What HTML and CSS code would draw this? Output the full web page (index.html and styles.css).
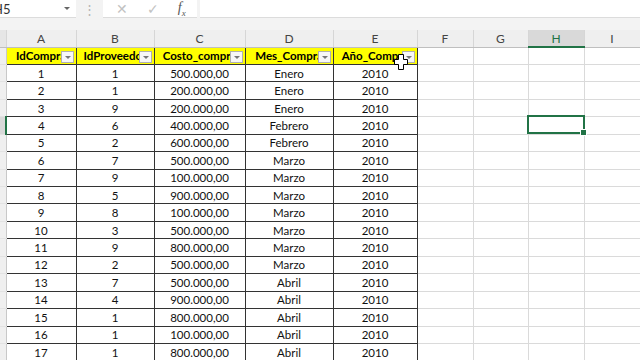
FILE: index.html
```html
<!DOCTYPE html>
<html lang="es">
<head>
  <meta charset="UTF-8" />
  <title>Compras - Excel</title>
  <link rel="stylesheet" href="styles.css">
</head>
<body>
  <div class="excel">
    <div class="formula-bar">
      <div class="name-box"><span class="cell-ref">H5</span><span class="caret"></span></div>
      <div class="grip">&#8942;</div>
      <div class="fx-buttons">
        <span class="btn-cancel">&#10005;</span>
        <span class="btn-enter">&#10003;</span>
        <span class="btn-fx"><i>f</i><sub>x</sub></span>
      </div>
      <div class="formula-input"></div>
    </div>

    <table class="sheet">
      <colgroup>
        <col class="c-row">
        <col class="c-a"><col class="c-b"><col class="c-c"><col class="c-d"><col class="c-e">
        <col class="c-f"><col class="c-g"><col class="c-h"><col class="c-i">
      </colgroup>
      <thead>
        <tr class="letters">
          <th class="corner"></th>
          <th>A</th><th>B</th><th>C</th><th>D</th><th>E</th>
          <th>F</th><th>G</th><th class="sel">H</th><th>I</th>
        </tr>
      </thead>
      <tbody>
        <tr class="titles">
          <th class="rownum"></th>
          <td class="t"><span>IdCompra</span><i class="filter"></i></td>
          <td class="t"><span>IdProveedor</span><i class="filter"></i></td>
          <td class="t"><span>Costo_compra</span><i class="filter"></i></td>
          <td class="t"><span>Mes_Compra</span><i class="filter"></i></td>
          <td class="t"><span>Año_Compra</span><i class="filter"></i></td>
          <td></td><td></td><td></td><td></td>
        </tr>
        <tr><th class="rownum"></th><td class="d">1</td><td class="d">1</td><td class="d">500.000,00</td><td class="d">Enero</td><td class="d">2010</td><td></td><td></td><td></td><td></td></tr>
        <tr><th class="rownum"></th><td class="d">2</td><td class="d">1</td><td class="d">200.000,00</td><td class="d">Enero</td><td class="d">2010</td><td></td><td></td><td></td><td></td></tr>
        <tr><th class="rownum"></th><td class="d">3</td><td class="d">9</td><td class="d">200.000,00</td><td class="d">Enero</td><td class="d">2010</td><td></td><td></td><td></td><td></td></tr>
        <tr><th class="rownum sel"></th><td class="d">4</td><td class="d">6</td><td class="d">400.000,00</td><td class="d">Febrero</td><td class="d">2010</td><td></td><td></td><td></td><td></td></tr>
        <tr><th class="rownum"></th><td class="d">5</td><td class="d">2</td><td class="d">600.000,00</td><td class="d">Febrero</td><td class="d">2010</td><td></td><td></td><td></td><td></td></tr>
        <tr><th class="rownum"></th><td class="d">6</td><td class="d">7</td><td class="d">500.000,00</td><td class="d">Marzo</td><td class="d">2010</td><td></td><td></td><td></td><td></td></tr>
        <tr><th class="rownum"></th><td class="d">7</td><td class="d">9</td><td class="d">100.000,00</td><td class="d">Marzo</td><td class="d">2010</td><td></td><td></td><td></td><td></td></tr>
        <tr><th class="rownum"></th><td class="d">8</td><td class="d">5</td><td class="d">900.000,00</td><td class="d">Marzo</td><td class="d">2010</td><td></td><td></td><td></td><td></td></tr>
        <tr><th class="rownum"></th><td class="d">9</td><td class="d">8</td><td class="d">100.000,00</td><td class="d">Marzo</td><td class="d">2010</td><td></td><td></td><td></td><td></td></tr>
        <tr><th class="rownum"></th><td class="d">10</td><td class="d">3</td><td class="d">500.000,00</td><td class="d">Marzo</td><td class="d">2010</td><td></td><td></td><td></td><td></td></tr>
        <tr><th class="rownum"></th><td class="d">11</td><td class="d">9</td><td class="d">800.000,00</td><td class="d">Marzo</td><td class="d">2010</td><td></td><td></td><td></td><td></td></tr>
        <tr><th class="rownum"></th><td class="d">12</td><td class="d">2</td><td class="d">500.000,00</td><td class="d">Marzo</td><td class="d">2010</td><td></td><td></td><td></td><td></td></tr>
        <tr><th class="rownum"></th><td class="d">13</td><td class="d">7</td><td class="d">500.000,00</td><td class="d">Abril</td><td class="d">2010</td><td></td><td></td><td></td><td></td></tr>
        <tr><th class="rownum"></th><td class="d">14</td><td class="d">4</td><td class="d">900.000,00</td><td class="d">Abril</td><td class="d">2010</td><td></td><td></td><td></td><td></td></tr>
        <tr><th class="rownum"></th><td class="d">15</td><td class="d">1</td><td class="d">800.000,00</td><td class="d">Abril</td><td class="d">2010</td><td></td><td></td><td></td><td></td></tr>
        <tr><th class="rownum"></th><td class="d">16</td><td class="d">1</td><td class="d">100.000,00</td><td class="d">Abril</td><td class="d">2010</td><td></td><td></td><td></td><td></td></tr>
        <tr><th class="rownum"></th><td class="d">17</td><td class="d">1</td><td class="d">800.000,00</td><td class="d">Abril</td><td class="d">2010</td><td></td><td></td><td></td><td></td></tr>
      </tbody>
    </table>

    <!-- active cell H5 -->
    <div class="selection"><i class="handle"></i></div>

    <!-- mouse pointer (excel fat cross) -->
    <svg class="pointer" width="14" height="16" viewBox="0 0 14 16">
      <path d="M4.5 0.5h5v5h4v5h-4v5h-5v-5h-4v-5h4z" fill="#fff" stroke="#000" stroke-width="1"/>
    </svg>
  </div>
</body>
</html>
```

FILE: styles.css
```css
body {
  margin: 0;
  background: #f3f3f3;
  font-family: Lato, "Open Sans", sans-serif;
  overflow: hidden;
}

.excel {
  position: relative;
  width: 640px;
  height: 360px;
  overflow: hidden;
}

/* formula bar */
.formula-bar {
  display: flex;
  height: 18px;
}

.name-box {
  width: 76px;
  background: #fff;
  border-bottom: 1px solid #dcdcdc;
  box-sizing: border-box;
  display: flex;
  align-items: center;
  justify-content: space-between;
  overflow: hidden;
}

.cell-ref {
  margin-left: -7px;
  font-size: 13px;
  color: #333;
}

.caret {
  width: 0;
  height: 0;
  margin-right: 6px;
  border-left: 3px solid transparent;
  border-right: 3px solid transparent;
  border-top: 3px solid #666;
}

.grip {
  width: 27px;
  text-align: center;
  color: #b5b5b5;
  font-size: 13px;
  line-height: 18px;
}

.fx-buttons {
  width: 94px;
  background: #fff;
  border-bottom: 1px solid #dcdcdc;
  box-sizing: border-box;
  display: flex;
  align-items: center;
  justify-content: space-around;
  padding: 0 2px 0 4px;
  font-size: 14px;
}

.btn-cancel, .btn-enter { color: #c2c2c2; }

.btn-fx {
  font-family: "Liberation Serif", serif;
  color: #555;
  font-size: 14px;
}
.btn-fx sub { font-size: 9px; font-style: italic; }

.formula-input {
  flex: 1;
  margin-left: 3px;
  background: #fff;
  border-bottom: 1px solid #dcdcdc;
}

/* grid */
.sheet {
  margin-top: 12px;
  border-collapse: collapse;
  table-layout: fixed;
  width: 640px;
  background: #fff;
}

.c-row { width: 6px; }
.c-a { width: 70px; }
.c-b { width: 78px; }
.c-c { width: 91px; }
.c-d { width: 88px; }
.c-e { width: 84px; }
.c-f { width: 56px; }
.c-g { width: 55px; }
.c-h { width: 56px; }
.c-i { width: 56px; }

.letters th {
  height: 16px;
  padding: 0;
  background: #efefef;
  border-right: 1px solid #d6d6d6;
  border-bottom: 1px solid #bfbfbf;
  font-weight: normal;
  font-size: 12px;
  color: #444;
}

.letters th.sel {
  background: #d9d9d9;
  color: #217346;
  border-bottom: 2px solid #217346;
}

.letters .corner { background: #e6e6e6; }

tbody tr { height: 17.45px; }

tbody td {
  padding: 0;
  border: 1px solid #dadada;
  white-space: nowrap;
  overflow: hidden;
  font-size: 11.5px;
  color: #111;
  text-align: center;
}

.rownum {
  padding: 0;
  background: #efefef;
  border-right: 1px solid #c8c8c8;
  border-bottom: 1px solid #e2e2e2;
}

.rownum.sel {
  background: #d9d9d9;
  border-right: 2px solid #217346;
}

td.d, td.t { border: 1px solid #333; }

td.t {
  position: relative;
  background: #ffff00;
  font-weight: bold;
  color: #000;
}

.filter {
  position: absolute;
  right: 2px;
  top: 3px;
  width: 11px;
  height: 10px;
  background: #f7f7f7;
  border: 1px solid #b0b0b0;
}

.filter::after {
  content: "";
  position: absolute;
  left: 3px;
  top: 4px;
  border-left: 3px solid transparent;
  border-right: 3px solid transparent;
  border-top: 3px solid #777;
}

.selection {
  position: absolute;
  left: 527px;
  top: 115px;
  width: 54px;
  height: 15px;
  border: 2px solid #217346;
}

.handle {
  position: absolute;
  right: -4px;
  bottom: -4px;
  width: 5px;
  height: 5px;
  background: #217346;
  border: 1px solid #fff;
}

.pointer {
  position: absolute;
  left: 394px;
  top: 54px;
}
```
